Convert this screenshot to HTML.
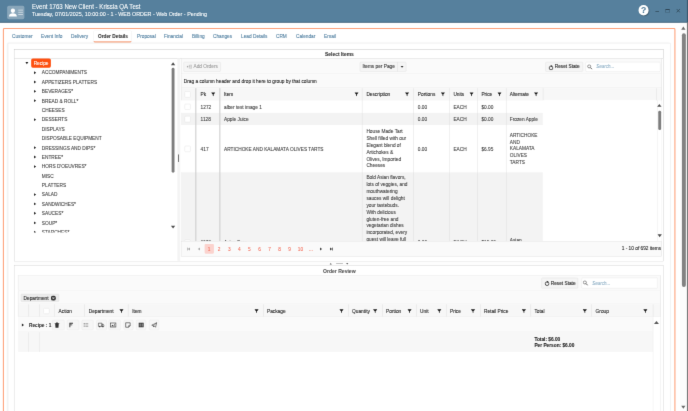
<!DOCTYPE html>
<html><head><meta charset="utf-8"><title>Event 1763 New Client - Krissia QA Test</title>
<style>
html,body{margin:0;padding:0;background:#fff;}
body{width:688px;height:411px;overflow:hidden;position:relative;font-family:"Liberation Sans",sans-serif;}
#root{position:absolute;left:0;top:0;width:1920px;height:1147px;transform:scale(0.3583333);transform-origin:0 0;font-size:13.3px;color:#404040;overflow:hidden;background:#fff;filter:url(#soft);-webkit-text-stroke:0.22px;}
#root div{box-sizing:border-box;}
.hdr{position:absolute;left:0;top:0;width:1920px;height:63px;background:#56809d;border-bottom:2px solid #3f5d74;}
.t1{position:absolute;left:89px;top:8px;font-size:18.6px;transform:scaleX(0.915);transform-origin:0 0;color:#fff;white-space:nowrap;line-height:20px;}
.t2{position:absolute;left:89px;top:30.5px;font-size:15.6px;transform:scaleX(0.962);transform-origin:0 0;color:#fff;white-space:nowrap;line-height:20px;}
.tab{position:absolute;top:86px;height:30px;line-height:30px;font-size:13.3px;color:#4c7c9e;white-space:nowrap;}
.txt{position:absolute;white-space:nowrap;line-height:16px;}
.flt{position:absolute;width:12px;height:12px;fill:#1a1a1a;}
.btn{position:absolute;border:1px solid #dcdcdc;border-radius:3px;background:#f5f5f5;}
.cb{position:absolute;width:16.8px;height:16.8px;border:1px solid #dcdcdc;border-radius:3px;background:#fff;}
.tri{position:absolute;width:0;height:0;border-style:solid;}
.ib{position:absolute;width:22px;height:22px;border:1px solid #e0e0e0;border-radius:3px;background:#f6f6f6;}
.vl{position:absolute;background:#d6d6d6;}
</style></head><body>
<svg width="0" height="0" style="position:absolute"><filter id="soft" x="0" y="0" width="100%" height="100%" color-interpolation-filters="sRGB"><feConvolveMatrix order="3" kernelMatrix="0 1 0 1 10 1 0 1 0" divisor="14" edgeMode="duplicate" preserveAlpha="true"/></filter></svg>
<div id="root">

<div class="hdr"></div>
<div style="position:absolute;left:19.5px;top:15.9px;width:48.8px;height:38.0px;background:rgba(255,255,255,0.30);border-radius:5px;"><svg viewBox="0 0 49 38" width="49" height="38" style="position:absolute;left:0;top:0"><circle cx="16" cy="14" r="6" fill="#fff"/><path d="M5 30c0-7 5-9 11-9s11 2 11 9z" fill="#fff"/><rect x="31" y="11" width="13" height="2.5" fill="#cfdbe4"/><rect x="31" y="17" width="13" height="2.5" fill="#cfdbe4"/><rect x="31" y="23" width="13" height="2.5" fill="#cfdbe4"/></svg></div>
<div class="t1">Event 1763 New Client - Krissia QA Test</div>
<div class="t2">Tuesday, 07/01/2025, 10:00:00 - 1 - WEB ORDER - Web Order - Pending</div>
<div style="position:absolute;left:1781.9px;top:14.2px;width:28.5px;height:28.5px;background:#fff;border-radius:50%;box-shadow:2px 2px 3px rgba(0,0,0,0.35);color:#56809d;font-weight:bold;font-size:24px;line-height:29px;text-align:center;">?</div>
<div style="position:absolute;left:1828.5px;top:30.7px;width:10.6px;height:2.2px;background:#2f4656;"></div>
<div style="position:absolute;left:1856.7px;top:24.8px;width:12.3px;height:10.0px;border:1.6px solid #2f4656;border-top-width:3px;"></div>
<svg style="position:absolute;left:1887.1px;top:24.0px" width="11.7" height="11.7" viewBox="0 0 12 12"><path d="M1 1L11 11M11 1L1 11" stroke="#2f4656" stroke-width="2.2" fill="none"/></svg>
<div style="position:absolute;left:1896.6px;top:63.6px;width:23.4px;height:1083.3px;background:#fcfcfc;"></div>
<div style="position:absolute;left:1902.7px;top:92.7px;width:11.4px;height:708.8px;background:#828282;border-radius:6px;"></div>
<div class="tri" style="left:1901.2px;top:74.2px;border-width:0 6.5px 9px 6.5px;border-color:transparent transparent #6a6a6a transparent;"></div>
<div class="tri" style="left:1901.2px;top:1132.4px;border-width:9px 6.5px 0 6.5px;border-color:#6a6a6a transparent transparent transparent;"></div>
<div style="position:absolute;left:1917.2px;top:0.0px;width:2.8px;height:62.5px;background:#3c5a70;"></div>
<div style="position:absolute;left:1917.2px;top:62.5px;width:2.8px;height:1084.5px;background:#7a7a7a;"></div>
<div style="position:absolute;left:8.4px;top:78.1px;width:1876.2px;height:1094.0px;border:3px solid #fea27b;border-radius:4px;"></div>
<div class="tab" style="left:33.5px">Customer</div>
<div class="tab" style="left:114.4px">Event Info</div>
<div class="tab" style="left:198.1px">Delivery</div>
<div class="tab" style="left:382.3px">Proposal</div>
<div class="tab" style="left:457.7px">Financial</div>
<div class="tab" style="left:535.8px">Billing</div>
<div class="tab" style="left:594.4px">Changes</div>
<div class="tab" style="left:672.6px">Lead Details</div>
<div class="tab" style="left:770.2px">CRM</div>
<div class="tab" style="left:826.0px">Calendar</div>
<div class="tab" style="left:904.2px">Email</div>
<div style="position:absolute;left:260.4px;top:85.4px;width:108.0px;height:33.5px;border:1px solid #e6e6e6;border-bottom:3.2px solid #f47c4a;border-radius:5px;"></div>
<div class="tab" style="left:273.5px;font-weight:bold;color:#333">Order Details</div>
<div style="position:absolute;left:22.3px;top:121.1px;width:1848.8px;height:1051.0px;border:1px solid #e6e6e6;box-shadow:0 0 5px rgba(0,0,0,0.10);"></div>
<div style="position:absolute;left:39.1px;top:137.6px;width:1812.8px;height:592.2px;border:1.6px solid #c2c2c2;background:#fff;"></div>
<div style="position:absolute;left:39.1px;top:137.6px;width:1812.8px;height:25.4px;border:1.6px solid #c2c2c2;background:#fff;"></div>
<div class="txt" style="left:747.2px;width:400px;text-align:center;top:144.1px;font-weight:bold;font-size:13.7px;color:#333;">Select Items</div>
<div class="tri" style="left:71.3px;top:173.4px;border-width:6px 4.25px 0 4.25px;border-color:#222 transparent transparent transparent;"></div>
<div style="position:absolute;left:86.5px;top:163.3px;width:55.3px;height:26.2px;background:#fe5010;border-radius:4.5px;"></div>
<div class="txt" style="left:94.0px;top:169.2px;color:#fff;">Recipe</div>
<div style="position:absolute;left:39.1px;top:162.7px;width:435.3px;height:485.9px;overflow:hidden;"><div class="tri" style="left:55.8px;top:36.1px;border-width:4.5px 0 4.5px 6.5px;border-color:transparent transparent transparent #222;"></div><div class="txt" style="left:77.6px;top:31.6px;">ACCOMPANIMENTS</div><div class="tri" style="left:55.8px;top:62.3px;border-width:4.5px 0 4.5px 6.5px;border-color:transparent transparent transparent #222;"></div><div class="txt" style="left:77.6px;top:59.5px;">APPETIZERS PLATTERS</div><div class="tri" style="left:55.8px;top:88.5px;border-width:4.5px 0 4.5px 6.5px;border-color:transparent transparent transparent #222;"></div><div class="txt" style="left:77.6px;top:84.7px;">BEVERAGES*</div><div class="tri" style="left:55.8px;top:114.6px;border-width:4.5px 0 4.5px 6.5px;border-color:transparent transparent transparent #222;"></div><div class="txt" style="left:77.6px;top:112.6px;">BREAD &amp; ROLL*</div><div class="txt" style="left:77.6px;top:137.7px;">CHEESES</div><div class="tri" style="left:55.8px;top:167.0px;border-width:4.5px 0 4.5px 6.5px;border-color:transparent transparent transparent #222;"></div><div class="txt" style="left:77.6px;top:162.8px;">DESSERTS</div><div class="txt" style="left:77.6px;top:190.7px;">DISPLAYS</div><div class="txt" style="left:77.6px;top:215.8px;">DISPOSABLE EQUIPMENT</div><div class="tri" style="left:55.8px;top:245.5px;border-width:4.5px 0 4.5px 6.5px;border-color:transparent transparent transparent #222;"></div><div class="txt" style="left:77.6px;top:243.7px;">DRESSINGS AND DIPS*</div><div class="tri" style="left:55.8px;top:271.7px;border-width:4.5px 0 4.5px 6.5px;border-color:transparent transparent transparent #222;"></div><div class="txt" style="left:77.6px;top:268.8px;">ENTREE*</div><div class="tri" style="left:55.8px;top:297.9px;border-width:4.5px 0 4.5px 6.5px;border-color:transparent transparent transparent #222;"></div><div class="txt" style="left:77.6px;top:294.0px;">HORS D'OEUVRES*</div><div class="txt" style="left:77.6px;top:321.9px;">MISC</div><div class="txt" style="left:77.6px;top:347.0px;">PLATTERS</div><div class="tri" style="left:55.8px;top:376.4px;border-width:4.5px 0 4.5px 6.5px;border-color:transparent transparent transparent #222;"></div><div class="txt" style="left:77.6px;top:372.1px;">SALAD</div><div class="tri" style="left:55.8px;top:402.6px;border-width:4.5px 0 4.5px 6.5px;border-color:transparent transparent transparent #222;"></div><div class="txt" style="left:77.6px;top:400.0px;">SANDWICHES*</div><div class="tri" style="left:55.8px;top:428.8px;border-width:4.5px 0 4.5px 6.5px;border-color:transparent transparent transparent #222;"></div><div class="txt" style="left:77.6px;top:425.1px;">SAUCES*</div><div class="tri" style="left:55.8px;top:454.9px;border-width:4.5px 0 4.5px 6.5px;border-color:transparent transparent transparent #222;"></div><div class="txt" style="left:77.6px;top:453.0px;">SOUP*</div><div class="tri" style="left:55.8px;top:481.1px;border-width:4.5px 0 4.5px 6.5px;border-color:transparent transparent transparent #222;"></div><div class="txt" style="left:77.6px;top:478.1px;">STARCHES*</div></div>
<div class="tri" style="left:476.6px;top:173.5px;border-width:0 6.5px 8px 6.5px;border-color:transparent transparent #4d4d4d transparent;"></div>
<div class="tri" style="left:477.4px;top:630.0px;border-width:8px 6.5px 0 6.5px;border-color:#4d4d4d transparent transparent transparent;"></div>
<div style="position:absolute;left:478.6px;top:188.7px;width:8.9px;height:293.6px;background:#7d7d7d;border-radius:4px;"></div>
<div style="position:absolute;left:494.5px;top:162.7px;width:8.9px;height:565.7px;background:#f4f4f4;"></div>
<div style="position:absolute;left:496.7px;top:430.9px;width:2.5px;height:21.2px;background:#444;"></div>
<div style="position:absolute;left:504.6px;top:162.7px;width:1341.8px;height:554.5px;border:1px solid #dedede;background:#fff;"></div>
<div style="position:absolute;left:504.6px;top:162.7px;width:1341.8px;height:44.4px;background:#fafafa;border:1px solid #dedede;"></div>
<div class="btn" style="position:absolute;left:512.4px;top:172.5px;width:103.3px;height:27.3px;"></div>
<svg viewBox="0 0 14 12" width="14" height="12" style="position:absolute;left:521.0px;top:179.6px"><path d="M0 6h4.4M2.2 3.8v4.4M6 2.2h4.6M6 6h4.6M6 9.8h4.6M11 0.8h2.2v10.4H11" fill="none" stroke="#8f8f8f" stroke-width="1.5"/></svg>
<div class="txt" style="left:540.0px;top:177.6px;color:#9a9a9a;">Add Orders</div>
<div class="btn" style="position:absolute;left:1003.8px;top:172.5px;width:106.3px;height:27.3px;border-radius:3px 0 0 3px;"></div>
<div class="txt" style="left:1011.9px;top:177.6px;color:#333;">Items per Page</div>
<div class="btn" style="position:absolute;left:1109.3px;top:172.5px;width:24.3px;height:27.3px;border-radius:0 3px 3px 0;"></div>
<div class="tri" style="left:1117.9px;top:183.9px;border-width:5px 4.0px 0 4.0px;border-color:#333 transparent transparent transparent;"></div>
<div class="btn" style="position:absolute;left:1522.0px;top:172.5px;width:104.9px;height:27.3px;"><svg viewBox="0 0 16 16" width="15.5" height="15.5" style="position:absolute;left:6.5px;top:7px"><circle cx="8" cy="9" r="5.3" fill="none" stroke="#2a2a2a" stroke-width="2.2"/><path d="M7.2 0.4l5 3.2-5 3.2z" fill="#2a2a2a"/><path d="M5.4 2.6l1.8 1 0 2.2z" fill="#f5f5f5"/></svg></div>
<div class="txt" style="left:1548.0px;top:177.6px;color:#222;">Reset State</div>
<div style="position:absolute;left:1634.2px;top:172.5px;width:208.7px;height:27.3px;border:1px solid #e2e2e2;border-radius:3px;background:#fff;"><svg viewBox="0 0 16 16" width="16" height="16" style="position:absolute;left:2.5px;top:5.5px"><circle cx="6.2" cy="6.2" r="4.3" stroke="#555" stroke-width="1.7" fill="none"/><path d="M9.4 9.4l5 5" stroke="#555" stroke-width="2.6"/></svg></div>
<div class="txt" style="left:1664.1px;top:177.6px;color:#8fb0c6;font-style:italic;font-size:12.6px;">Search...</div>
<div style="position:absolute;left:504.6px;top:207.1px;width:1341.8px;height:38.5px;background:#fafafa;border:1px solid #dedede;border-top:none;"></div>
<div class="txt" style="left:512.9px;top:219.4px;color:#222;">Drag a column header and drop it here to group by that column</div>
<div style="position:absolute;left:504.6px;top:245.6px;width:1341.8px;height:34.6px;background:#f7f7f7;border:1px solid #dedede;border-top:none;"></div>
<div style="position:absolute;left:504.6px;top:280.2px;width:1328.4px;height:35.2px;background:#fff;"></div>
<div style="position:absolute;left:504.6px;top:315.3px;width:1010.8px;height:34.0px;background:#f3f3f3;"></div>
<div style="position:absolute;left:504.6px;top:349.4px;width:1328.4px;height:131.7px;background:#fff;"></div>
<div style="position:absolute;left:504.6px;top:481.1px;width:1010.8px;height:192.3px;background:#f3f3f3;"></div>
<div style="position:absolute;left:1515.3px;top:280.2px;width:317.6px;height:393.2px;background:#fff;"></div>
<div class="vl" style="position:absolute;left:1010.2px;top:245.6px;width:1.1px;height:427.8px;"></div>
<div class="vl" style="position:absolute;left:1154.2px;top:245.6px;width:1.1px;height:427.8px;"></div>
<div class="vl" style="position:absolute;left:1253.0px;top:245.6px;width:1.1px;height:427.8px;"></div>
<div class="vl" style="position:absolute;left:1332.8px;top:245.6px;width:1.1px;height:427.8px;"></div>
<div class="vl" style="position:absolute;left:1412.1px;top:245.6px;width:1.1px;height:427.8px;"></div>
<div class="vl" style="position:absolute;left:1515.3px;top:245.6px;width:1.1px;height:34.6px;"></div>
<div class="vl" style="position:absolute;left:1832.4px;top:245.6px;width:1.1px;height:34.6px;"></div>
<div style="position:absolute;left:544.7px;top:245.6px;width:3.3px;height:427.8px;background:#cdcdcd;"></div>
<div style="position:absolute;left:611.7px;top:245.6px;width:3.6px;height:427.8px;background:#cdcdcd;"></div>
<div class="txt" style="left:559.8px;top:255.7px;color:#222">Pk</div>
<svg class="flt" style="left:589.0px;top:256.9px" viewBox="0 0 12 12"><path d="M0.6 1.2h10.8v0.9L7.1 6.6v4.9L4.9 10.2V6.6L0.6 2.1z"/></svg>
<div class="txt" style="left:625.1px;top:255.7px;color:#222">Item</div>
<svg class="flt" style="left:989.2px;top:256.9px" viewBox="0 0 12 12"><path d="M0.6 1.2h10.8v0.9L7.1 6.6v4.9L4.9 10.2V6.6L0.6 2.1z"/></svg>
<div class="txt" style="left:1022.5px;top:255.7px;color:#222">Description</div>
<svg class="flt" style="left:1130.1px;top:256.9px" viewBox="0 0 12 12"><path d="M0.6 1.2h10.8v0.9L7.1 6.6v4.9L4.9 10.2V6.6L0.6 2.1z"/></svg>
<div class="txt" style="left:1166.0px;top:255.7px;color:#222">Portions</div>
<svg class="flt" style="left:1230.0px;top:256.9px" viewBox="0 0 12 12"><path d="M0.6 1.2h10.8v0.9L7.1 6.6v4.9L4.9 10.2V6.6L0.6 2.1z"/></svg>
<div class="txt" style="left:1265.3px;top:255.7px;color:#222">Units</div>
<svg class="flt" style="left:1309.5px;top:256.9px" viewBox="0 0 12 12"><path d="M0.6 1.2h10.8v0.9L7.1 6.6v4.9L4.9 10.2V6.6L0.6 2.1z"/></svg>
<div class="txt" style="left:1343.4px;top:255.7px;color:#222">Price</div>
<svg class="flt" style="left:1388.2px;top:256.9px" viewBox="0 0 12 12"><path d="M0.6 1.2h10.8v0.9L7.1 6.6v4.9L4.9 10.2V6.6L0.6 2.1z"/></svg>
<div class="txt" style="left:1422.7px;top:255.7px;color:#222">Alternate</div>
<svg class="flt" style="left:1490.4px;top:256.9px" viewBox="0 0 12 12"><path d="M0.6 1.2h10.8v0.9L7.1 6.6v4.9L4.9 10.2V6.6L0.6 2.1z"/></svg>
<div class="cb" style="left:514.9px;top:254.8px"></div>
<div class="cb" style="left:514.9px;top:289.6px"></div>
<div class="cb" style="left:514.9px;top:324.0px"></div>
<div class="cb" style="left:514.9px;top:406.9px"></div>
<div class="txt" style="left:559.8px;top:292.0px;">1272</div>
<div class="txt" style="left:625.1px;top:292.0px;">alber test image 1</div>
<div class="txt" style="left:1166.0px;top:292.0px;">0.00</div>
<div class="txt" style="left:1265.3px;top:292.0px;">EACH</div>
<div class="txt" style="left:1343.4px;top:292.0px;">$0.00</div>
<div class="txt" style="left:559.8px;top:325.5px;">1128</div>
<div class="txt" style="left:625.1px;top:325.5px;">Apple Juice</div>
<div class="txt" style="left:1166.0px;top:325.5px;">0.00</div>
<div class="txt" style="left:1265.3px;top:325.5px;">EACH</div>
<div class="txt" style="left:1343.4px;top:325.5px;">$0.00</div>
<div class="txt" style="left:1422.7px;top:325.5px;">Frozen Apple</div>
<div class="txt" style="left:559.8px;top:409.2px;">417</div>
<div class="txt" style="left:625.1px;top:409.2px;">ARTICHOKE AND KALAMATA OLIVES TARTS</div>
<div class="txt" style="left:1166.0px;top:409.2px;">0.00</div>
<div class="txt" style="left:1265.3px;top:409.2px;">EACH</div>
<div class="txt" style="left:1343.4px;top:409.2px;">$6.95</div>
<div class="txt" style="left:1022.5px;top:359.0px;">House Made Tart</div><div class="txt" style="left:1022.5px;top:378.5px;">Shell filled with our</div><div class="txt" style="left:1022.5px;top:398.0px;">Elegant blend of</div><div class="txt" style="left:1022.5px;top:417.6px;">Artichokes &amp;</div><div class="txt" style="left:1022.5px;top:437.1px;">Olives, Imported</div><div class="txt" style="left:1022.5px;top:453.9px;">Cheeses</div>
<div class="txt" style="left:1422.7px;top:370.1px;">ARTICHOKE</div><div class="txt" style="left:1422.7px;top:389.7px;">AND</div><div class="txt" style="left:1422.7px;top:406.4px;">KALAMATA</div><div class="txt" style="left:1422.7px;top:426.0px;">OLIVES</div><div class="txt" style="left:1422.7px;top:445.5px;">TARTS</div>
<div class="txt" style="left:1022.5px;top:487.3px;">Bold Asian flavors,</div><div class="txt" style="left:1022.5px;top:506.9px;">lots of veggies, and</div><div class="txt" style="left:1022.5px;top:526.4px;">mouthwatering</div><div class="txt" style="left:1022.5px;top:546.0px;">sauces will delight</div><div class="txt" style="left:1022.5px;top:565.5px;">your tastebuds.</div><div class="txt" style="left:1022.5px;top:585.0px;">With delicious</div><div class="txt" style="left:1022.5px;top:604.6px;">gluten-free and</div><div class="txt" style="left:1022.5px;top:621.3px;">vegetarian dishes</div><div class="txt" style="left:1022.5px;top:640.8px;">incorporated, every</div><div class="txt" style="left:1022.5px;top:660.4px;">guest will leave full</div>
<div style="position:absolute;left:504.6px;top:641.9px;width:1326.1px;height:31.5px;overflow:hidden;"><div class="txt" style="left:55.3px;top:27.4px">1173</div><div class="txt" style="left:120.6px;top:27.4px">Asian Fare</div><div class="txt" style="left:661.4px;top:27.4px">0.00</div><div class="txt" style="left:760.7px;top:27.4px">EACH</div><div class="txt" style="left:838.9px;top:27.4px">$15.00</div><div class="txt" style="left:918.1px;top:20.5px">Asian</div><div class="cb" style="left:10.3px;top:27.0px"></div></div>
<div style="position:absolute;left:1833.5px;top:280.2px;width:12.8px;height:393.2px;background:#fff;border-left:1px solid #e5e5e5;"></div>
<div class="tri" style="left:1833.7px;top:289.6px;border-width:0 6.5px 8px 6.5px;border-color:transparent transparent #4d4d4d transparent;"></div>
<div class="tri" style="left:1834.8px;top:654.0px;border-width:8px 6.5px 0 6.5px;border-color:#4d4d4d transparent transparent transparent;"></div>
<div style="position:absolute;left:1836.8px;top:309.2px;width:8.4px;height:53.6px;background:#7d7d7d;border-radius:4px;"></div>
<div style="position:absolute;left:504.6px;top:673.4px;width:1341.8px;height:43.8px;background:#fafafa;border:1px solid #dedede;"></div>
<div style="position:absolute;left:570.7px;top:680.9px;width:26.5px;height:27.1px;background:#fbd3ce;border-radius:3px;"></div>
<div class="txt" style="left:383.8px;width:400px;text-align:center;top:688.3px;color:#f4715f;">1</div>
<div class="txt" style="left:411.7px;width:400px;text-align:center;top:688.3px;color:#f4715f;">2</div>
<div class="txt" style="left:439.9px;width:400px;text-align:center;top:688.3px;color:#f4715f;">3</div>
<div class="txt" style="left:468.1px;width:400px;text-align:center;top:688.3px;color:#f4715f;">4</div>
<div class="txt" style="left:496.0px;width:400px;text-align:center;top:688.3px;color:#f4715f;">5</div>
<div class="txt" style="left:524.2px;width:400px;text-align:center;top:688.3px;color:#f4715f;">6</div>
<div class="txt" style="left:552.1px;width:400px;text-align:center;top:688.3px;color:#f4715f;">7</div>
<div class="txt" style="left:580.3px;width:400px;text-align:center;top:688.3px;color:#f4715f;">8</div>
<div class="txt" style="left:608.2px;width:400px;text-align:center;top:688.3px;color:#f4715f;">9</div>
<div class="txt" style="left:638.3px;width:400px;text-align:center;top:688.3px;color:#f4715f;">10</div>
<div class="txt" style="left:667.9px;width:400px;text-align:center;top:688.3px;color:#f4715f;">...</div>
<div class="tri" style="left:524.4px;top:690.6px;border-width:4.0px 6px 4.0px 0;border-color:transparent #a8a8a8 transparent transparent;"></div>
<div style="position:absolute;left:522.0px;top:690.6px;width:2px;height:8px;background:#a8a8a8"></div>
<div class="tri" style="left:552.1px;top:690.6px;border-width:4.0px 6px 4.0px 0;border-color:transparent #a8a8a8 transparent transparent;"></div>
<div class="tri" style="left:893.4px;top:690.6px;border-width:4.0px 0 4.0px 6px;border-color:transparent transparent transparent #444;"></div>
<div class="tri" style="left:920.7px;top:690.6px;border-width:4.0px 0 4.0px 6px;border-color:transparent transparent transparent #444;"></div>
<div style="position:absolute;left:926.9px;top:690.6px;width:2px;height:8px;background:#444"></div>
<div class="txt" style="left:1562.8px;width:282.4px;text-align:right;top:686.6px;color:#222;">1 - 10 of 692 items</div>
<div style="position:absolute;left:39.1px;top:729.5px;width:1812.6px;height:12.3px;background:#fdfdfd;"></div>
<div style="position:absolute;left:938.2px;top:734.8px;width:19.0px;height:1.4px;background:#555;"></div>
<div class="tri" style="left:920.2px;top:733.6px;border-width:0 3.0px 4px 3.0px;border-color:transparent transparent #555 transparent;"></div>
<div class="tri" style="left:966.2px;top:733.6px;border-width:4px 3.0px 0 3.0px;border-color:#555 transparent transparent transparent;"></div>
<div style="position:absolute;left:39.1px;top:741.2px;width:1812.8px;height:430.9px;border:1.6px solid #c8c8c8;background:#fff;"></div>
<div class="txt" style="left:746.9px;width:400px;text-align:center;top:749.7px;font-weight:bold;font-size:14.1px;color:#555;">Order Review</div>
<div style="position:absolute;left:50.2px;top:768.6px;width:1793.0px;height:42.4px;background:#fafafa;border:1px solid #e3e3e3;"></div>
<div class="btn" style="position:absolute;left:1511.4px;top:775.3px;width:102.1px;height:29.6px;"><svg viewBox="0 0 16 16" width="15.5" height="15.5" style="position:absolute;left:6.5px;top:7px"><circle cx="8" cy="9" r="5.3" fill="none" stroke="#2a2a2a" stroke-width="2.2"/><path d="M7.2 0.4l5 3.2-5 3.2z" fill="#2a2a2a"/><path d="M5.4 2.6l1.8 1 0 2.2z" fill="#f5f5f5"/></svg></div>
<div class="txt" style="left:1536.8px;top:783.2px;color:#222;">Reset State</div>
<div style="position:absolute;left:1622.5px;top:775.3px;width:212.1px;height:29.6px;border:1px solid #e2e2e2;border-radius:3px;background:#fff;"><svg viewBox="0 0 16 16" width="16" height="16" style="position:absolute;left:2.5px;top:5.5px"><circle cx="6.2" cy="6.2" r="4.3" stroke="#555" stroke-width="1.7" fill="none"/><path d="M9.4 9.4l5 5" stroke="#555" stroke-width="2.6"/></svg></div>
<div class="txt" style="left:1652.7px;top:783.2px;color:#8fb0c6;font-style:italic;font-size:12.6px;">Search...</div>
<div style="position:absolute;left:50.2px;top:811.0px;width:1793.0px;height:38.0px;background:#fafafa;border:1px solid #e3e3e3;border-top:none;"></div>
<div style="position:absolute;left:58.3px;top:819.6px;width:107.2px;height:22.6px;background:#ececec;border:1px solid #dcdcdc;border-radius:3px;"><svg viewBox="0 0 14 14" width="14" height="14" style="position:absolute;right:8px;top:4.2px"><circle cx="7" cy="7" r="7" fill="#333"/><path d="M4.3 4.3l5.4 5.4M9.7 4.3L4.3 9.7" stroke="#fff" stroke-width="1.8"/></svg></div>
<div class="txt" style="left:65.9px;top:825.0px;color:#222;">Department</div>
<div style="position:absolute;left:50.2px;top:848.9px;width:1793.0px;height:35.2px;background:#f7f7f7;border:1px solid #e3e3e3;border-top:none;"></div>
<div class="vl" style="position:absolute;left:79.8px;top:848.9px;width:1.1px;height:35.2px;"></div>
<div class="vl" style="position:absolute;left:109.4px;top:848.9px;width:1.1px;height:35.2px;"></div>
<div class="vl" style="position:absolute;left:151.3px;top:848.9px;width:1.1px;height:35.2px;"></div>
<div class="vl" style="position:absolute;left:235.8px;top:848.9px;width:1.1px;height:35.2px;"></div>
<div class="vl" style="position:absolute;left:357.2px;top:848.9px;width:1.1px;height:35.2px;"></div>
<div class="vl" style="position:absolute;left:734.2px;top:848.9px;width:1.1px;height:35.2px;"></div>
<div class="vl" style="position:absolute;left:972.0px;top:848.9px;width:1.1px;height:35.2px;"></div>
<div class="vl" style="position:absolute;left:1066.9px;top:848.9px;width:1.1px;height:35.2px;"></div>
<div class="vl" style="position:absolute;left:1160.9px;top:848.9px;width:1.1px;height:35.2px;"></div>
<div class="vl" style="position:absolute;left:1245.5px;top:848.9px;width:1.1px;height:35.2px;"></div>
<div class="vl" style="position:absolute;left:1340.1px;top:848.9px;width:1.1px;height:35.2px;"></div>
<div class="vl" style="position:absolute;left:1480.5px;top:848.9px;width:1.1px;height:35.2px;"></div>
<div class="vl" style="position:absolute;left:1650.7px;top:848.9px;width:1.1px;height:35.2px;"></div>
<div class="vl" style="position:absolute;left:1821.8px;top:848.9px;width:1.1px;height:35.2px;"></div>
<div class="txt" style="left:163.5px;top:861.3px;color:#222">Action</div>
<div class="txt" style="left:247.5px;top:861.3px;color:#222">Department</div>
<svg class="flt" style="left:333.3px;top:861.9px" viewBox="0 0 12 12"><path d="M0.6 1.2h10.8v0.9L7.1 6.6v4.9L4.9 10.2V6.6L0.6 2.1z"/></svg>
<div class="txt" style="left:369.2px;top:861.3px;color:#222">Item</div>
<svg class="flt" style="left:709.8px;top:861.9px" viewBox="0 0 12 12"><path d="M0.6 1.2h10.8v0.9L7.1 6.6v4.9L4.9 10.2V6.6L0.6 2.1z"/></svg>
<div class="txt" style="left:745.1px;top:861.3px;color:#222">Package</div>
<svg class="flt" style="left:947.3px;top:861.9px" viewBox="0 0 12 12"><path d="M0.6 1.2h10.8v0.9L7.1 6.6v4.9L4.9 10.2V6.6L0.6 2.1z"/></svg>
<div class="txt" style="left:982.6px;top:861.3px;color:#222">Quantity</div>
<svg class="flt" style="left:1041.3px;top:861.9px" viewBox="0 0 12 12"><path d="M0.6 1.2h10.8v0.9L7.1 6.6v4.9L4.9 10.2V6.6L0.6 2.1z"/></svg>
<div class="txt" style="left:1077.5px;top:861.3px;color:#222">Portion</div>
<svg class="flt" style="left:1136.5px;top:861.9px" viewBox="0 0 12 12"><path d="M0.6 1.2h10.8v0.9L7.1 6.6v4.9L4.9 10.2V6.6L0.6 2.1z"/></svg>
<div class="txt" style="left:1172.4px;top:861.3px;color:#222">Unit</div>
<svg class="flt" style="left:1220.0px;top:861.9px" viewBox="0 0 12 12"><path d="M0.6 1.2h10.8v0.9L7.1 6.6v4.9L4.9 10.2V6.6L0.6 2.1z"/></svg>
<div class="txt" style="left:1255.8px;top:861.3px;color:#222">Price</div>
<svg class="flt" style="left:1314.0px;top:861.9px" viewBox="0 0 12 12"><path d="M0.6 1.2h10.8v0.9L7.1 6.6v4.9L4.9 10.2V6.6L0.6 2.1z"/></svg>
<div class="txt" style="left:1350.7px;top:861.3px;color:#222">Retail Price</div>
<svg class="flt" style="left:1455.8px;top:861.9px" viewBox="0 0 12 12"><path d="M0.6 1.2h10.8v0.9L7.1 6.6v4.9L4.9 10.2V6.6L0.6 2.1z"/></svg>
<div class="txt" style="left:1491.6px;top:861.3px;color:#222">Total</div>
<svg class="flt" style="left:1626.0px;top:861.9px" viewBox="0 0 12 12"><path d="M0.6 1.2h10.8v0.9L7.1 6.6v4.9L4.9 10.2V6.6L0.6 2.1z"/></svg>
<div class="txt" style="left:1662.1px;top:861.3px;color:#222">Group</div>
<svg class="flt" style="left:1794.8px;top:861.9px" viewBox="0 0 12 12"><path d="M0.6 1.2h10.8v0.9L7.1 6.6v4.9L4.9 10.2V6.6L0.6 2.1z"/></svg>
<div class="cb" style="left:121.4px;top:859.5px"></div>
<div style="position:absolute;left:50.2px;top:884.1px;width:1771.5px;height:43.0px;background:#fafafa;border-bottom:1px solid #e8e8e8;"></div>
<div class="tri" style="left:61.0px;top:902.8px;border-width:4.25px 0 4.25px 6.5px;border-color:transparent transparent transparent #222;"></div>
<div class="txt" style="left:80.9px;top:900.4px;font-weight:bold;color:#333;font-size:13.2px">Recipe : 1</div>
<div style="position:absolute;left:145.7px;top:892.5px;width:34.6px;height:28.2px;border:1px solid #e6e6e6;border-radius:3px;background:#f6f6f6;"></div>
<svg viewBox="0 0 16 16" width="20" height="20" style="position:absolute;left:148.8px;top:897.3px"><path d="M3 4h10v1.5H3zM6 2.5h4V4H6zM4 6h8l-.7 8H4.7z" fill="#333"/></svg>
<div style="position:absolute;left:187.0px;top:892.5px;width:33.5px;height:28.2px;border:1px solid #e6e6e6;border-radius:3px;background:#f6f6f6;"></div>
<svg viewBox="0 0 16 16" width="20" height="20" style="position:absolute;left:188.4px;top:897.3px"><path d="M4.5 3h8v2H6.6v1.6h4.2v2H6.6V13H4.5z" fill="#333"/></svg>
<div style="position:absolute;left:227.7px;top:892.5px;width:33.5px;height:28.2px;border:1px solid #e6e6e6;border-radius:3px;background:#f6f6f6;"></div>
<svg viewBox="0 0 16 16" width="20" height="20" style="position:absolute;left:229.7px;top:897.3px"><path d="M3 3.5h2v2H3zM3 7h2v2H3zM3 10.5h2v2H3zM6.5 4h6.5v1H6.5zM6.5 7.5h6.5v1H6.5zM6.5 11h6.5v1H6.5z" fill="#777"/></svg>
<div style="position:absolute;left:269.0px;top:892.5px;width:28.7px;height:28.2px;border:1px solid #e6e6e6;border-radius:3px;background:#f6f6f6;"></div>
<svg viewBox="0 0 16 16" width="20" height="20" style="position:absolute;left:272.4px;top:897.3px"><path d="M2 4h8v7H2zM10 6.5h3l1.5 2V11H10z" fill="none" stroke="#333" stroke-width="1.3"/><circle cx="5" cy="11.8" r="1.4" fill="#333"/><circle cx="12" cy="11.8" r="1.4" fill="#333"/></svg>
<div style="position:absolute;left:302.5px;top:892.5px;width:34.6px;height:28.2px;border:1px solid #e6e6e6;border-radius:3px;background:#f6f6f6;"></div>
<svg viewBox="0 0 16 16" width="20" height="20" style="position:absolute;left:305.9px;top:897.3px"><rect x="2" y="3.5" width="12" height="9" fill="none" stroke="#333" stroke-width="1.3"/><path d="M3.5 11l3-3.5 2.5 2.5 1.5-1.2 2 2.2z" fill="#333"/><circle cx="10.8" cy="6.3" r="1.1" fill="#333"/></svg>
<div style="position:absolute;left:345.2px;top:892.5px;width:26.8px;height:28.2px;border:1px solid #e6e6e6;border-radius:3px;background:#f6f6f6;"></div>
<svg viewBox="0 0 16 16" width="20" height="20" style="position:absolute;left:346.7px;top:897.3px"><path d="M3 3h10v6.5L9.5 13H3z" fill="none" stroke="#333" stroke-width="1.4"/><path d="M9.5 13V9.5H13" fill="none" stroke="#333" stroke-width="1.2"/></svg>
<div style="position:absolute;left:379.5px;top:892.5px;width:28.7px;height:28.2px;border:1px solid #e6e6e6;border-radius:3px;background:#f6f6f6;"></div>
<svg viewBox="0 0 16 16" width="20" height="20" style="position:absolute;left:383.8px;top:897.3px"><path d="M2.5 3h11v10h-11z" fill="#333"/><path d="M4.5 5h2.5v2H4.5zM9 5h2.5v2H9zM4.5 9h2.5v2H4.5zM9 9h2.5v2H9z" fill="#f7f7f7"/></svg>
<div style="position:absolute;left:416.4px;top:892.5px;width:27.3px;height:28.2px;border:1px solid #e6e6e6;border-radius:3px;background:#f6f6f6;"></div>
<svg viewBox="0 0 16 16" width="20" height="20" style="position:absolute;left:421.4px;top:897.3px"><path d="M2 8.5l11-5.5-2.5 10-3-3-1.5 2.5-.5-3.5z" fill="none" stroke="#333" stroke-width="1.3"/><path d="M13 3L6 9.5" stroke="#333" stroke-width="1"/></svg>
<div style="position:absolute;left:50.2px;top:927.1px;width:1771.5px;height:54.7px;background:#f7f7f7;"></div>
<div style="position:absolute;left:79.8px;top:927.1px;width:1.1px;height:54.7px;background:#dcdcdc;"></div>
<div style="position:absolute;left:109.4px;top:927.1px;width:1.1px;height:54.7px;background:#dcdcdc;"></div>
<div class="txt" style="left:1491.3px;top:939.4px;font-weight:bold;color:#222;font-size:13.3px">Total: $6.00</div>
<div class="txt" style="left:1491.3px;top:956.2px;font-weight:bold;color:#222;font-size:13.3px">Per Person: $6.00</div>
<div style="position:absolute;left:1822.3px;top:884.1px;width:20.9px;height:288.0px;background:#fff;border-left:1px solid #e5e5e5;"></div>
<div class="tri" style="left:1825.4px;top:896.0px;border-width:0 7.0px 8.5px 7.0px;border-color:transparent transparent #5a5a5a transparent;"></div>
<div style="position:absolute;left:1843.3px;top:768.6px;width:1.1px;height:403.5px;background:#e3e3e3;"></div>
</div></body></html>
